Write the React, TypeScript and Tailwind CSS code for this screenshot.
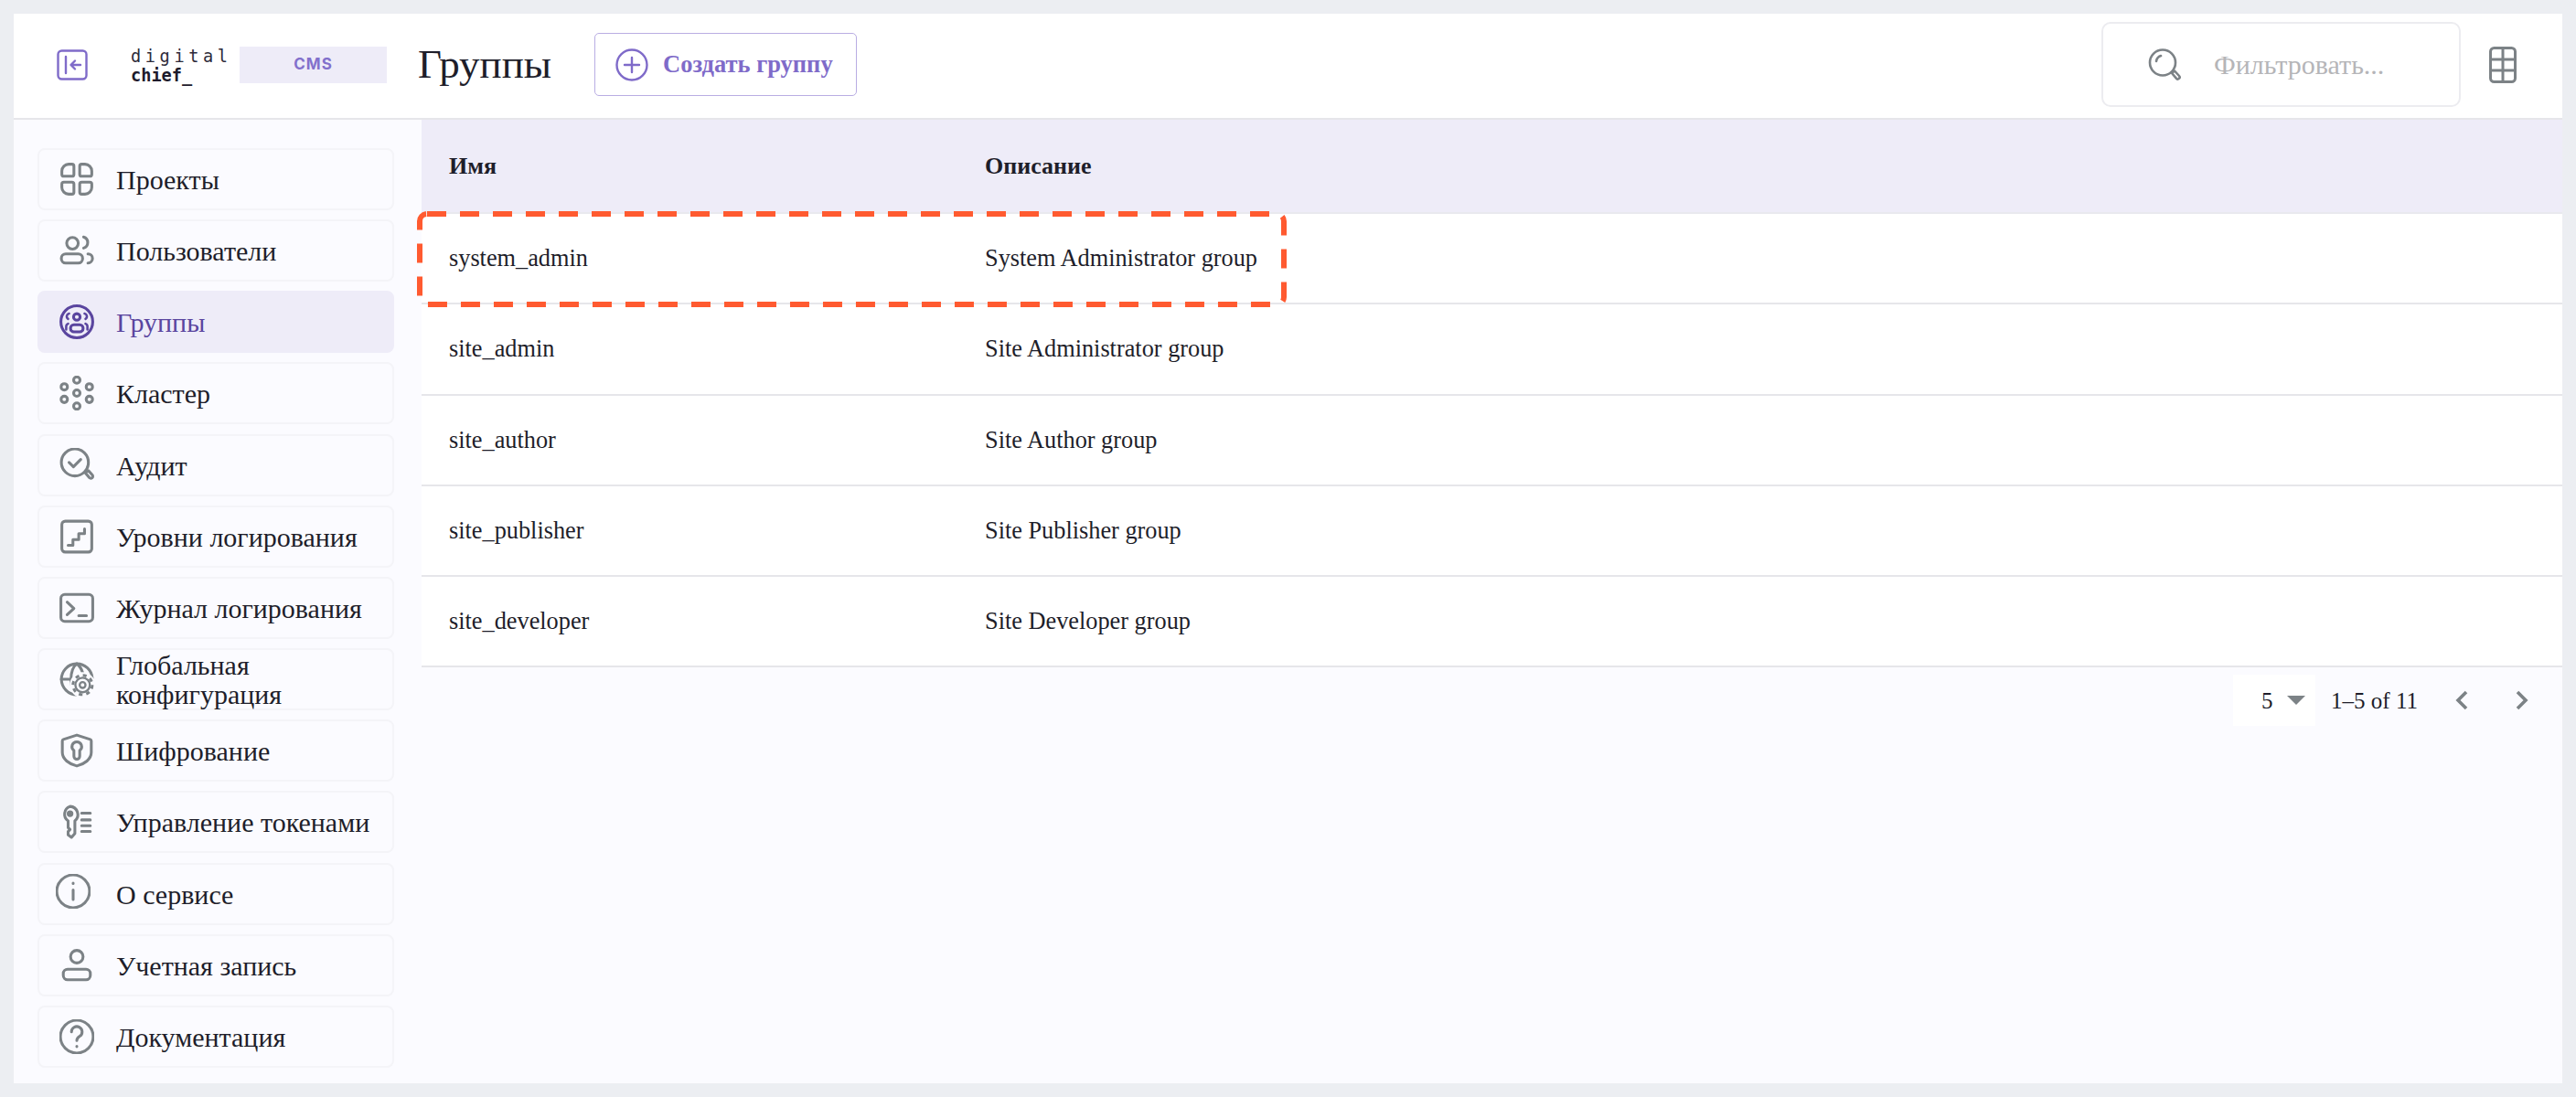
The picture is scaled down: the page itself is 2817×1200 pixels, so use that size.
import type { ReactNode } from 'react';

const SERIF = 'font-["Liberation_Serif","Times_New_Roman",serif]';

function Svg({ children, className = '' }: { children: ReactNode; className?: string }) {
  return (
    <svg viewBox="0 0 36 36" fill="none" stroke="currentColor" strokeWidth="2.900" strokeLinecap="round" strokeLinejoin="round" className={`w-[38px] h-[38px] shrink-0 ${className}`}>
      {children}
    </svg>
  );
}

const petal = 'M9.500 2.500H13a2 2 0 0 1 2 2V13a2 2 0 0 1-2 2H4.500a2 2 0 0 1-2-2V9.500a7 7 0 0 1 7-7z';

const icons: Record<string, ReactNode> = {
  projects: (
    <Svg>
      <path d={petal} />
      <path d={petal} transform="matrix(-1 0 0 1 36 0)" />
      <path d={petal} transform="matrix(1 0 0 -1 0 36)" />
      <path d={petal} transform="matrix(-1 0 0 -1 36 36)" />
    </Svg>
  ),
  users: (
    <Svg>
      <circle cx="13.500" cy="10.500" r="6" />
      <path d="M25 4a6 6 0 0 1 0 11.500" />
      <rect x="2" y="21.500" width="22" height="9.500" rx="4.500" />
      <path d="M29.500 21.500a4.700 4.700 0 0 1 0 9.500" />
    </Svg>
  ),
  groups: (
    <Svg>
      <circle cx="18" cy="18" r="16.500" />
      <circle cx="18" cy="13" r="3.400" />
      <rect x="11.500" y="21" width="13" height="7.500" rx="3.500" />
      <path d="M10 9.500a3 3 0 0 0-1 5.500M26 9.500a3 3 0 0 1 1 5.500M7 26v-3a3 3 0 0 1 2-3M29 26v-3a3 3 0 0 0-2-3" strokeWidth="2.400" />
    </Svg>
  ),
  cluster: (
    <Svg>
      <circle cx="18" cy="4.500" r="3.300" />
      <circle cx="18" cy="18" r="3.300" />
      <circle cx="18" cy="31.500" r="3.300" />
      <circle cx="5" cy="11.500" r="3.300" />
      <circle cx="31" cy="11.500" r="3.300" />
      <circle cx="5" cy="24.500" r="3.300" />
      <circle cx="31" cy="24.500" r="3.300" />
    </Svg>
  ),
  audit: (
    <Svg>
      <circle cx="16" cy="15" r="14" />
      <path d="M10 15l4.500 4.500L22 12" />
      <path d="M27 26l3-2.500 4 4.500a2 2 0 0 1-3 2.800z" />
    </Svg>
  ),
  levels: (
    <Svg>
      <rect x="2.500" y="2" width="31" height="32" rx="3.500" />
      <path d="M9 27h5v-6h6v-6h6V10" />
    </Svg>
  ),
  terminal: (
    <Svg>
      <rect x="1.500" y="4" width="33" height="28" rx="4" />
      <path d="M8 12l7 6.500-7 6.500M20 26h8" />
    </Svg>
  ),
  globe: (
    <Svg>
      <path d="M34 17a16 16 0 1 0-16 17" />
      <path d="M2 18h10M18 2c-4 3-6 9-6 16s2 13 6 16M18 2c3 2 5 6 6 9" />
      <circle cx="24" cy="24" r="10.300" stroke="#FBFBFF" strokeWidth="6" />
      <circle cx="24" cy="24" r="10" strokeWidth="2.800" strokeLinecap="butt" strokeDasharray="3.900 3.950" />
      <circle cx="24" cy="24" r="7.500" strokeWidth="2.200" />
      <circle cx="24" cy="24" r="3" strokeWidth="2.200" />
    </Svg>
  ),
  shield: (
    <Svg>
      <path d="M18 2l14 4.500a1.500 1.500 0 0 1 1 1.500v12c0 7-7 12-15 14C10 32 3 27 3 20V8a1.500 1.500 0 0 1 1-1.500z" />
      <path d="M18 9a5 5 0 0 1 3 9v6a3 3 0 0 1-6 0v-6a5 5 0 0 1 3-9z" />
    </Svg>
  ),
  tokens: (
    <Svg>
      <path d="M11 2a8.500 8.500 0 0 1 5 15v13l-3.500 4-3.500-2.500V28l2-2-2-2v-7a8.500 8.500 0 0 1 2-15z" />
      <circle cx="11" cy="9.500" r="2" fill="currentColor" />
      <path d="M23 9h9M23 16h9M23 22h9M23 28h9" />
    </Svg>
  ),
  info: (
    <Svg className="-translate-x-[4px] -translate-y-[3px]">
      <circle cx="18" cy="18" r="17" />
      <path d="M18 16.500v10M18 9.500v.5" />
    </Svg>
  ),
  account: (
    <Svg>
      <circle cx="18" cy="9" r="6.500" />
      <rect x="4" y="22" width="28" height="11" rx="4.500" />
    </Svg>
  ),
  docs: (
    <Svg>
      <circle cx="18" cy="18" r="17" />
      <path d="M12.500 13a5.500 5.500 0 1 1 8.500 4.600c-2 1.300-3 2.400-3 4.400M18 28v.3" />
    </Svg>
  ),
};

const menu = [
  { key: 'projects', label: 'Проекты' },
  { key: 'users', label: 'Пользователи' },
  { key: 'groups', label: 'Группы', active: true },
  { key: 'cluster', label: 'Кластер' },
  { key: 'audit', label: 'Аудит' },
  { key: 'levels', label: 'Уровни логирования' },
  { key: 'terminal', label: 'Журнал логирования' },
  { key: 'globe', label: 'Глобальная конфигурация' },
  { key: 'shield', label: 'Шифрование' },
  { key: 'tokens', label: 'Управление токенами' },
  { key: 'info', label: 'О сервисе' },
  { key: 'account', label: 'Учетная запись' },
  { key: 'docs', label: 'Документация' },
];

const rows = [
  { name: 'system_admin', desc: 'System Administrator group' },
  { name: 'site_admin', desc: 'Site Administrator group' },
  { name: 'site_author', desc: 'Site Author group' },
  { name: 'site_publisher', desc: 'Site Publisher group' },
  { name: 'site_developer', desc: 'Site Developer group' },
];

function Header() {
  return (
    <header className="h-[116px] bg-white border-b-2 border-[#E6E6EA] flex items-center pl-[47px] pr-[50px] pb-[3px] shrink-0">
      <svg viewBox="0 0 34 34" fill="none" stroke="#7F6BC9" strokeWidth="2.400" strokeLinecap="round" strokeLinejoin="round" className="w-[34px] h-[34px] shrink-0">
        <rect x="1.500" y="1.500" width="31" height="31" rx="4" />
        <path d="M10 8v18M26 17H16M20 12.500L15.500 17l4.500 4.500" />
      </svg>
      <div className="ml-[47px] w-[119px] pt-[2px] font-['DejaVu_Sans_Mono',monospace] text-[#1D1A2B] text-[18.600px] leading-[21px]">
        <div className="tracking-[4.600px] text-[#2E2B3A]">digital</div>
        <div className="font-bold">chief_</div>
      </div>
      <div className="w-[161px] h-[40px] bg-[#EEECF8] flex items-center justify-center text-[#8270CC] text-[17px] font-bold tracking-[1px] font-['Inter',sans-serif]">CMS</div>
      <h1 className={`ml-[34px] text-[45px] leading-none font-normal text-[#1E1E2A] ${SERIF}`}>Группы</h1>
      <button className="ml-[47px] w-[287px] h-[69px] border-[1.500px] border-[#B9ADE3] rounded-[5px] flex items-center pl-[22px] gap-[16px] text-[#7F6BC9]">
        <svg viewBox="0 0 36 36" fill="none" stroke="currentColor" strokeWidth="2.400" strokeLinecap="round" className="w-[36px] h-[36px] shrink-0">
          <circle cx="18" cy="18" r="16.500" />
          <path d="M18 10v16M10 18h16" />
        </svg>
        <span className={`text-[26.500px] font-bold ${SERIF}`}>Создать группу</span>
      </button>
      <div className="ml-auto w-[393px] h-[93px] border-2 border-[#ECECF0] rounded-[10px] flex items-center pl-[49px] gap-[36px]">
        <svg viewBox="0 0 36 36" fill="none" stroke="#7C8286" strokeWidth="2.600" strokeLinecap="round" strokeLinejoin="round" className="w-[36px] h-[36px] shrink-0">
          <circle cx="16" cy="15.500" r="14" />
          <path d="M9 14a7.500 7.500 0 0 1 5-6M26 27l3-2.500 5 5.500a2 2 0 0 1-3 2.800z" />
        </svg>
        <span className={`text-[30px] text-[#B5B5B8] ${SERIF}`}>Фильтровать...</span>
      </div>
      <svg viewBox="0 0 30 40" fill="none" stroke="#7C8286" strokeWidth="3" strokeLinejoin="round" className="ml-[31px] w-[30px] h-[40px] shrink-0">
        <rect x="1.500" y="1.500" width="27" height="37" rx="4" />
        <path d="M1.500 14h27M1.500 26h27M15 1.500v37" />
      </svg>
    </header>
  );
}

function Sidebar() {
  return (
    <nav className="w-[446px] shrink-0 bg-[#FBFBFF] pl-[26px] pr-[30px] pt-[31px] flex flex-col gap-[10.170px]">
      {menu.map((item) => (
        <a
          key={item.key}
          className={`h-[68px] shrink-0 rounded-[8px] border-2 flex items-center pl-[22px] gap-[24px] ${
            item.active ? 'bg-[#EEECF8] border-[#EEECF8] text-[#5A459F]' : 'border-[#F4F4F8] text-[#7C8286]'
          }`}
        >
          {icons[item.key]}
          <span className={`text-[30px] leading-[32px] pt-[2px] ${SERIF} ${item.active ? 'text-[#5A459F]' : 'text-[#1E1E2A]'}`}>{item.label}</span>
        </a>
      ))}
    </nav>
  );
}

function GroupsTable() {
  return (
    <div className={`relative flex-1 bg-[#FBFBFF] text-[#1E1E2A] ${SERIF}`}>
      <div className="h-[103px] bg-[#EEECF8] grid grid-cols-[586px_1fr] items-center px-[30px] text-[26px] font-bold border-b-2 border-[#E9E9EE]">
        <div>Имя</div>
        <div>Описание</div>
      </div>
      {rows.map((r) => (
        <div key={r.name} className="h-[99.300px] bg-white grid grid-cols-[586px_1fr] items-center px-[30px] text-[26.300px] border-b-2 border-[#E6E6EA]">
          <div>{r.name}</div>
          <div>{r.desc}</div>
        </div>
      ))}
      <div className="flex items-center justify-end mt-[8px] pr-[36px] text-[25px]">
        <div className="w-[90px] h-[56px] bg-white flex items-center pl-[31px] gap-[15px]">
          <span>5</span>
          <svg viewBox="0 0 20 10" className="w-[20px] h-[10px]"><path d="M0 0h20L10 10z" fill="#7C8286" /></svg>
        </div>
        <span className="ml-[17px]">1–5 of 11</span>
        <svg viewBox="0 0 16 24" fill="none" stroke="#7C8286" strokeWidth="3.600" className="ml-[40px] w-[16px] h-[24px]"><path d="M13 3L4 12l9 9" /></svg>
        <svg viewBox="0 0 16 24" fill="none" stroke="#7C8286" strokeWidth="3.600" className="ml-[50px] w-[16px] h-[24px]"><path d="M3 3l9 9-9 9" /></svg>
      </div>
      {/* рамка-выделение поверх первой строки */}
      <svg className="absolute left-[-2px] top-[103px] w-[945px] h-[99px] overflow-visible" fill="none">
        <rect x="0" y="0" width="945" height="99" rx="8" stroke="#FF5A30" strokeWidth="6" strokeDasharray="21 15" />
      </svg>
    </div>
  );
}

export default function App() {
  return (
    <div className="min-h-[1200px] bg-[#ECEEF2] p-[15px] flex">
      <div className="flex-1 h-[1170px] flex flex-col overflow-hidden">
        <Header />
        <div className="flex flex-1 min-h-0">
          <Sidebar />
          <GroupsTable />
        </div>
      </div>
    </div>
  );
}
